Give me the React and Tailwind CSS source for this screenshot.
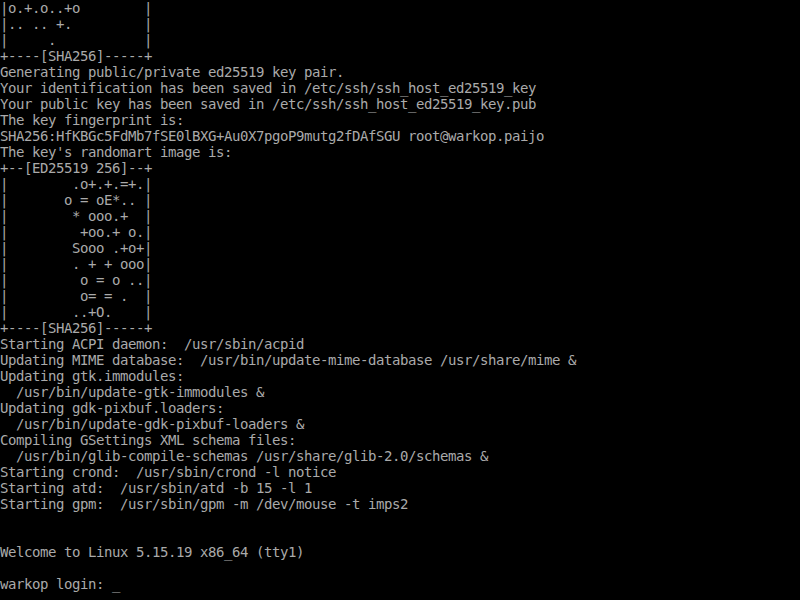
import React from 'react'

const lines = [
  '|o.+.o..+o        |',
  '|.. .. +.         |',
  '|     .           |',
  '+----[SHA256]-----+',
  'Generating public/private ed25519 key pair.',
  'Your identification has been saved in /etc/ssh/ssh_host_ed25519_key',
  'Your public key has been saved in /etc/ssh/ssh_host_ed25519_key.pub',
  'The key fingerprint is:',
  'SHA256:HfKBGc5FdMb7fSE0lBXG+Au0X7pgoP9mutg2fDAfSGU root@warkop.paijo',
  "The key's randomart image is:",
  '+--[ED25519 256]--+',
  '|        .o+.+.=+.|',
  '|       o = oE*.. |',
  '|        * ooo.+  |',
  '|         +oo.+ o.|',
  '|        Sooo .+o+|',
  '|        . + + ooo|',
  '|         o = o ..|',
  '|         o= = .  |',
  '|        ..+O.    |',
  '+----[SHA256]-----+',
  'Starting ACPI daemon:  /usr/sbin/acpid',
  'Updating MIME database:  /usr/bin/update-mime-database /usr/share/mime &',
  'Updating gtk.immodules:',
  '  /usr/bin/update-gtk-immodules &',
  'Updating gdk-pixbuf.loaders:',
  '  /usr/bin/update-gdk-pixbuf-loaders &',
  'Compiling GSettings XML schema files:',
  '  /usr/bin/glib-compile-schemas /usr/share/glib-2.0/schemas &',
  'Starting crond:  /usr/sbin/crond -l notice',
  'Starting atd:  /usr/sbin/atd -b 15 -l 1',
  'Starting gpm:  /usr/sbin/gpm -m /dev/mouse -t imps2',
  '',
  '',
  'Welcome to Linux 5.15.19 x86_64 (tty1)',
  '',
  'warkop login: _',
]

const App = () => {
  return (
    <div className="w-[800px] h-[600px] overflow-hidden bg-black text-[#aaaaaa] font-['DejaVu_Sans_Mono',monospace] text-[14px] tracking-[-0.4287px]">
      {lines.map((line, i) => (
        <div key={i} className="h-4 leading-4 whitespace-pre">
          {line}
        </div>
      ))}
    </div>
  )
}

export default App
